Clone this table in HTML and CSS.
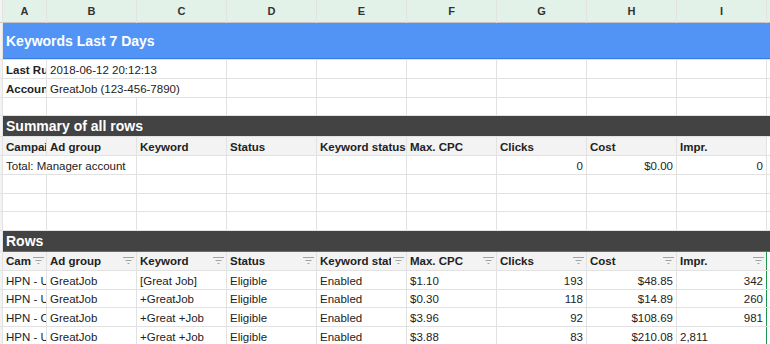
FILE: index.html
```html
<html lang="en">
<head>
  <meta charset="UTF-8">
  <title>Keywords Last 7 Days</title>
  <link rel="stylesheet" href="styles.css">
</head>
<body>

  <div class="sheet">
    <!-- letras das colunas -->
    <div class="st hrow"></div>
    <div class="hd">A</div>
    <div class="hd">B</div>
    <div class="hd">C</div>
    <div class="hd">D</div>
    <div class="hd">E</div>
    <div class="hd">F</div>
    <div class="hd">G</div>
    <div class="hd">H</div>
    <div class="hd">I</div>
    <div class="hd"></div>

    <!-- titulo -->
    <div class="st"></div>
    <div class="title">Keywords Last 7 Days</div>

    <div class="st"></div>
    <div class="c b">Last Run</div>
    <div class="c span2">2018-06-12 20:12:13</div>
    <div class="c"></div><div class="c"></div><div class="c"></div><div class="c"></div><div class="c"></div><div class="c"></div><div class="c"></div>

    <div class="st"></div>
    <div class="c b">Account</div>
    <div class="c span2">GreatJob (123-456-7890)</div>
    <div class="c"></div><div class="c"></div><div class="c"></div><div class="c"></div><div class="c"></div><div class="c"></div><div class="c"></div>

    <div class="st"></div>
    <div class="c"></div><div class="c"></div><div class="c"></div><div class="c"></div><div class="c"></div><div class="c"></div><div class="c"></div><div class="c"></div><div class="c"></div><div class="c"></div>

    <!-- resumo -->
    <div class="st"></div>
    <div class="bar">Summary of all rows</div>

    <div class="st"></div>
    <div class="c th">Campaign</div>
    <div class="c th">Ad group</div>
    <div class="c th">Keyword</div>
    <div class="c th">Status</div>
    <div class="c th">Keyword status</div>
    <div class="c th">Max. CPC</div>
    <div class="c th">Clicks</div>
    <div class="c th">Cost</div>
    <div class="c th">Impr.</div>
    <div class="c"></div>

    <div class="st"></div>
    <div class="c span2">Total: Manager account</div>
    <div class="c"></div><div class="c"></div><div class="c"></div><div class="c"></div>
    <div class="c r">0</div>
    <div class="c r">$0.00</div>
    <div class="c r">0</div>
    <div class="c"></div>

    <div class="st"></div>
    <div class="c"></div><div class="c"></div><div class="c"></div><div class="c"></div><div class="c"></div><div class="c"></div><div class="c"></div><div class="c"></div><div class="c"></div><div class="c"></div>
    <div class="st"></div>
    <div class="c"></div><div class="c"></div><div class="c"></div><div class="c"></div><div class="c"></div><div class="c"></div><div class="c"></div><div class="c"></div><div class="c"></div><div class="c"></div>
    <div class="st"></div>
    <div class="c"></div><div class="c"></div><div class="c"></div><div class="c"></div><div class="c"></div><div class="c"></div><div class="c"></div><div class="c"></div><div class="c"></div><div class="c"></div>

    <!-- linhas com filtro -->
    <div class="st"></div>
    <div class="bar filtered">Rows</div>

    <div class="st"></div>
    <div class="c th f"><span>Campaign</span><svg width="11" height="7" viewBox="0 0 11 7"><path d="M0 .5h11M2.5 3.5h6M4.5 6.5h2"/></svg></div>
    <div class="c th f"><span>Ad group</span><svg width="11" height="7" viewBox="0 0 11 7"><path d="M0 .5h11M2.5 3.5h6M4.5 6.5h2"/></svg></div>
    <div class="c th f"><span>Keyword</span><svg width="11" height="7" viewBox="0 0 11 7"><path d="M0 .5h11M2.5 3.5h6M4.5 6.5h2"/></svg></div>
    <div class="c th f"><span>Status</span><svg width="11" height="7" viewBox="0 0 11 7"><path d="M0 .5h11M2.5 3.5h6M4.5 6.5h2"/></svg></div>
    <div class="c th f"><span>Keyword status</span><svg width="11" height="7" viewBox="0 0 11 7"><path d="M0 .5h11M2.5 3.5h6M4.5 6.5h2"/></svg></div>
    <div class="c th f"><span>Max. CPC</span><svg width="11" height="7" viewBox="0 0 11 7"><path d="M0 .5h11M2.5 3.5h6M4.5 6.5h2"/></svg></div>
    <div class="c th f"><span>Clicks</span><svg width="11" height="7" viewBox="0 0 11 7"><path d="M0 .5h11M2.5 3.5h6M4.5 6.5h2"/></svg></div>
    <div class="c th f"><span>Cost</span><svg width="11" height="7" viewBox="0 0 11 7"><path d="M0 .5h11M2.5 3.5h6M4.5 6.5h2"/></svg></div>
    <div class="c th f edge"><span>Impr.</span><svg width="11" height="7" viewBox="0 0 11 7"><path d="M0 .5h11M2.5 3.5h6M4.5 6.5h2"/></svg></div>
    <div class="c"></div>

    <div class="st"></div>
    <div class="c">HPN - US Search</div>
    <div class="c">GreatJob</div>
    <div class="c">[Great Job]</div>
    <div class="c">Eligible</div>
    <div class="c">Enabled</div>
    <div class="c">$1.10</div>
    <div class="c r">193</div>
    <div class="c r">$48.85</div>
    <div class="c r edge">342</div>
    <div class="c"></div>

    <div class="st"></div>
    <div class="c">HPN - US Search</div>
    <div class="c">GreatJob</div>
    <div class="c">+GreatJob</div>
    <div class="c">Eligible</div>
    <div class="c">Enabled</div>
    <div class="c">$0.30</div>
    <div class="c r">118</div>
    <div class="c r">$14.89</div>
    <div class="c r edge">260</div>
    <div class="c"></div>

    <div class="st"></div>
    <div class="c">HPN - CA Search</div>
    <div class="c">GreatJob</div>
    <div class="c">+Great +Job</div>
    <div class="c">Eligible</div>
    <div class="c">Enabled</div>
    <div class="c">$3.96</div>
    <div class="c r">92</div>
    <div class="c r">$108.69</div>
    <div class="c r edge">981</div>
    <div class="c"></div>

    <div class="st"></div>
    <div class="c">HPN - US Search</div>
    <div class="c">GreatJob</div>
    <div class="c">+Great +Job</div>
    <div class="c">Eligible</div>
    <div class="c">Enabled</div>
    <div class="c">$3.88</div>
    <div class="c r">83</div>
    <div class="c r">$210.08</div>
    <div class="c edge">2,811</div>
    <div class="c"></div>
  </div>

</body>
</html>
```

FILE: styles.css
```css
body {
  margin: 0;
  height: 100vh;
  overflow: hidden;
  background: #fff;
  font-family: 'Liberation Sans', Arial, sans-serif;
  color: #222;
}

/* Grade da planilha: o fundo aparece nos gaps e vira a linha de grade */
.sheet {
  display: grid;
  grid-template-columns: 2px 43px repeat(8, 89px) 1fr;
  grid-template-rows: 22px 36px repeat(3, 17.75px) 20px repeat(5, 17.75px) 20px repeat(6, 17.75px);
  gap: 1px;
  background: #e2e2e2;
}

.st {
  background: #f3f3f3;
}
.st.hrow {
  box-shadow: 0 1px 0 #c4c4c4;
}

/* Cabecalho de colunas */
.hd {
  background: #e3f2e8;
  box-shadow: 0 1px 0 #c4c4c4;
  display: flex;
  justify-content: center;
  align-items: center;
  font-size: 11px;
  font-weight: bold;
  color: #333;
}

.title {
  grid-column: 2 / -1;
  background: #5294f5;
  border-bottom: 1px solid #3c7ce0;
  box-sizing: border-box;
  color: #fff;
  font-size: 14px;
  font-weight: bold;
  padding: 0 3px;
  display: flex;
  align-items: center;
}

.bar {
  grid-column: 2 / -1;
  background: #434343;
  color: #fff;
  font-size: 14px;
  font-weight: bold;
  padding: 0 3px;
  display: flex;
  align-items: center;
}
.bar.filtered {
  box-shadow: 0 1px 0 #1e9650;
}

.c {
  background: #fff;
  font-size: 11.5px;
  padding: 0 3px 2px;
  display: flex;
  align-items: flex-end;
  white-space: nowrap;
  overflow: hidden;
  min-width: 0;
}

.span2 {
  grid-column: span 2;
}

.b {
  font-weight: bold;
}

.r {
  justify-content: flex-end;
}

.th {
  background: #f3f3f3;
  font-weight: bold;
}

/* Cabecalho com icone de filtro */
.f {
  justify-content: space-between;
  align-items: center;
  padding: 0 2px 0 3px;
}
.f span {
  overflow: hidden;
  min-width: 0;
  margin-top: 1px;
}
.f svg {
  flex-shrink: 0;
  margin-left: 2px;
  fill: none;
  stroke: #9aa6a0;
  stroke-width: 1;
}

.edge {
  box-shadow: 1px 0 0 #1e9650;
  overflow: visible;
}
.edge.f {
  overflow: hidden;
}
```
